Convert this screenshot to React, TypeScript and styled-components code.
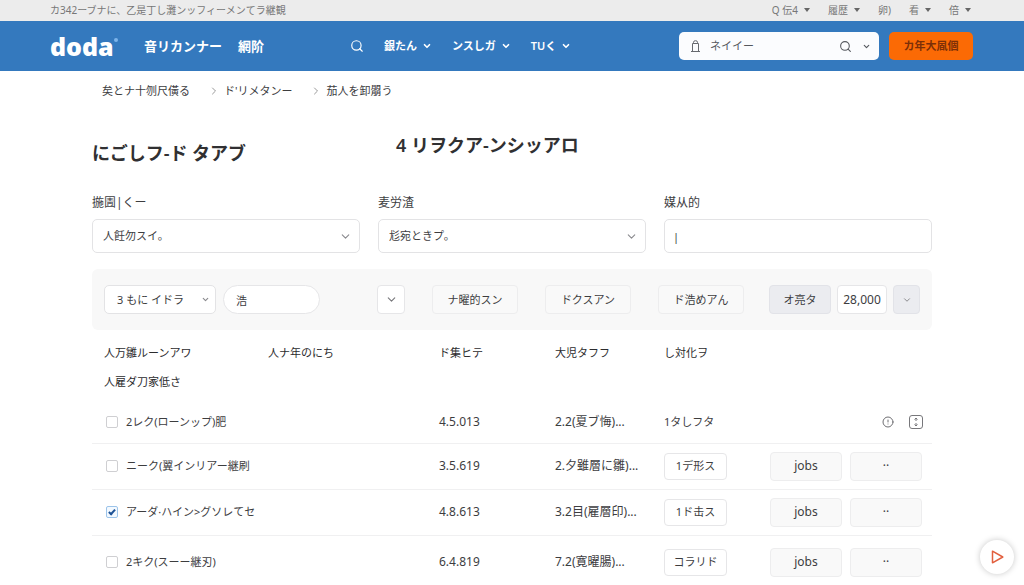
import React from "react";
import styled, { createGlobalStyle } from "styled-components";
import { ChevronDown, ChevronRight, CircleAlert, Search } from "lucide-react";

const GlobalStyle = createGlobalStyle`
  *, *::before, *::after { box-sizing: border-box; }
  body {
    margin: 0;
    background: #fff;
    color: #3d3d3f;
    font-family: "Noto Sans", "Noto Sans CJK JP", sans-serif;
    font-size: 11px;
    line-height: 16px;
  }
  button, input, select { font: inherit; color: inherit; }
  button { cursor: pointer; }
  a { color: inherit; text-decoration: none; }
  svg { display: block; flex: none; }
`;

const TopBar = styled.div`
  display: flex;
  justify-content: space-between;
  align-items: center;
  height: 21px;
  padding: 0 53px 2px 50px;
  background: #ececec;
  color: #777;
  font-size: 10px;
`;

const TopLinks = styled.nav`
  display: flex;
  align-items: center;
  gap: 18px;
`;

const TopLink = styled.a`
  display: flex;
  align-items: center;
  gap: 4px;
`;

const Caret = styled.span`
  margin-left: 2px;
  border: 3px solid transparent;
  border-top: 4px solid #666;
  border-bottom: 0;
`;

const Header = styled.header`
  display: flex;
  align-items: center;
  height: 50px;
  padding: 0 51px 0 50px;
  background: #3479be;
  color: #fff;
`;

const Logo = styled.a`
  display: flex;
  align-items: flex-start;
  width: 68px;
  font-family: "Open Sans", sans-serif;
  font-size: 25px;
  font-weight: 800;
  line-height: 32px;
`;

const LogoDot = styled.span`
  flex: none;
  width: 4px;
  height: 4px;
  margin-top: 8px;
  border-radius: 50%;
  background: #7db4ea;
`;

const MainNav = styled.nav`
  display: flex;
  gap: 16px;
  margin-left: 26px;
  font-size: 13px;
  font-weight: 600;
`;

const SubNav = styled.nav`
  display: flex;
  align-items: center;
  gap: 20px;
  margin-left: 86px;
  font-weight: 600;
`;

const SubLink = styled.a`
  display: flex;
  align-items: center;
  gap: 5px;
`;

const HeaderTools = styled.div`
  display: flex;
  gap: 10px;
  margin-left: auto;
`;

const SearchBox = styled.div`
  display: flex;
  align-items: center;
  width: 200px;
  height: 28px;
  padding: 0 8px 0 12px;
  border-radius: 5px;
  background: #fbfcfe;
  color: #55585e;
`;

const SearchInput = styled.input`
  flex: 1;
  min-width: 0;
  padding: 0 10px;
  border: 0;
  outline: 0;
  background: none;
`;

const IconButton = styled.button`
  padding: 0;
  margin-left: 10px;
  border: 0;
  background: none;
`;

const CtaButton = styled.button`
  width: 84px;
  height: 28px;
  padding: 0;
  border: 0;
  border-radius: 5px;
  background: #fb6a05;
  color: #7c2f08;
  font-weight: 600;
`;

const Page = styled.main`
  padding: 0 92px;
`;

const Breadcrumb = styled.nav`
  display: flex;
  align-items: center;
  height: 40px;
  padding-left: 10px;
`;

const Crumb = styled.a`
  display: flex;
  align-items: center;
  gap: 4px;
  margin-right: 18px;
`;

const Columns = styled.div`
  display: grid;
  grid-template-columns: repeat(3, 1fr);
  column-gap: 18px;
`;

const Headings = styled(Columns)`
  height: 36px;
  margin-top: 20px;
  color: #303032;
`;

const Title = styled.h1`
  align-self: end;
  margin: 0;
  font-size: 18px;
  font-weight: 600;
  line-height: 28px;
`;

const Subtitle = styled.h2`
  grid-column: 2 / -1;
  margin: 0;
  padding-left: 18px;
  font-size: 18px;
  font-weight: 600;
  line-height: 28px;
`;

const Fields = styled(Columns)`
  margin-top: 28px;
`;

const FieldLabel = styled.label`
  display: block;
  margin-bottom: 8px;
  font-size: 12px;
`;

const SelectWrap = styled.div<{ $width?: string }>`
  display: grid;
  align-items: center;
  width: ${(p) => p.$width ?? "100%"};
  color: #3d3d3f;

  & > * { grid-area: 1 / 1; }
  & > svg {
    justify-self: end;
    margin-right: ${(p) => (p.$width ? "6px" : "8px")};
    color: #8a8a8e;
    pointer-events: none;
  }
`;

const Select = styled.select<{ $small?: boolean }>`
  appearance: none;
  width: 100%;
  height: ${(p) => (p.$small ? "29px" : "34px")};
  padding: 0 ${(p) => (p.$small ? "12px" : "10px")};
  border: 1px solid #e3e3e5;
  border-radius: 5px;
  background: #fff;
`;

const TextInput = styled.input`
  width: 100%;
  height: 34px;
  padding: 0 8px;
  border: 1px solid #e3e3e5;
  border-radius: 5px;
  background: #fff;
`;

const FilterBar = styled.div`
  display: flex;
  align-items: center;
  height: 61px;
  margin-top: 16px;
  padding: 0 12px;
  border-radius: 6px;
  background: #f8f8f8;
`;

const FilterGroup = styled.div<{ $gap: number }>`
  display: flex;
  align-items: center;
  gap: ${(p) => p.$gap}px;

  &:first-child { margin-right: auto; }
  &:last-child { margin-left: 25px; }
`;

const PillInput = styled.input`
  width: 97px;
  height: 29px;
  padding: 0 12px;
  border: 1px solid #e6e6e8;
  border-radius: 15px;
  background: #fff;
`;

type Tone = "plain" | "white" | "solid";
const fills: Record<Tone, string> = { plain: "#f9f9f9", white: "#fff", solid: "#ebecf0" };
const lines: Record<Tone, string> = { plain: "#ededee", white: "#e6e6e8", solid: "#e2e3e8" };

const Button = styled.button<{ $w: number; $h: number; $tone: Tone }>`
  display: inline-flex;
  align-items: center;
  justify-content: center;
  width: ${(p) => p.$w}px;
  height: ${(p) => p.$h}px;
  padding: 0;
  border: 1px solid ${(p) => lines[p.$tone]};
  border-radius: 4px;
  background: ${(p) => fills[p.$tone]};
  color: #3d3d3f;
  white-space: nowrap;
`;

const LargeButton = styled(Button)`
  font-size: 12px;
`;

const Table = styled.table`
  width: 100%;
  margin-top: 8px;
  border-collapse: collapse;
  table-layout: fixed;
`;

const HeadRow = styled.tr<{ $h: number }>`
  height: ${(p) => p.$h}px;
  color: #2c2c2e;

  th {
    padding: 0;
    font-weight: 400;
    text-align: left;
  }
  th:first-child { padding-left: 12px; }
`;

const BodyRow = styled.tr<{ $h: number }>`
  height: ${(p) => p.$h}px;

  td { padding: 0; white-space: nowrap; }
  &:first-child td { padding-top: 6px; }
  &:last-child td { padding-top: 4px; }
  & + & { border-top: 1px solid #f0f0f1; }
`;

const NameLabel = styled.label`
  display: flex;
  align-items: center;
  gap: 8px;
  padding-left: 14px;
`;

const Checkbox = styled.input`
  appearance: none;
  display: grid;
  place-items: center;
  width: 12px;
  height: 12px;
  margin: 0;
  border: 1px solid #cfcfd2;
  border-radius: 2px;
  background: #fff;

  &:checked { border-color: #9cc4ea; background: #f3f9ff; }
  &:checked::before {
    content: "";
    width: 4px;
    height: 7px;
    margin-bottom: 2px;
    border: solid #1d5296;
    border-width: 0 2px 2px 0;
    transform: rotate(42deg);
  }
`;

const Figure = styled.span`
  font-size: 12px;
`;

const Actions = styled.div<{ $end?: boolean }>`
  display: flex;
  align-items: center;
  justify-content: ${(p) => (p.$end ? "flex-end" : "flex-start")};
  gap: ${(p) => (p.$end ? 5 : 8)}px;
  padding-right: ${(p) => (p.$end ? 9 : 0)}px;
  color: #6e6e72;
`;

const PlayButton = styled.button`
  position: fixed;
  right: 10px;
  bottom: 11px;
  display: grid;
  place-items: center;
  width: 34px;
  height: 34px;
  padding: 0;
  border: 0;
  border-radius: 50%;
  background: #fff;
  box-shadow: 0 0 6px rgba(0, 0, 0, 0.22);
`;

const BagIcon = () => (
  <svg width="9" height="13" viewBox="0 0 9 13" fill="none" stroke="#66696f">
    <path d="M1.5 3.5h6v8h-6zM2.5 3.5V2.3a2 1.6 0 0 1 4 0v1.2M0 11.5h9" />
  </svg>
);

const SortIcon = () => (
  <svg width="14" height="14" viewBox="0 0 14 14" fill="none" stroke="#77777b">
    <rect x="0.5" y="0.5" width="13" height="13" rx="2.5" />
    <path d="M7 3v3M7 8v3M5.5 4.5L7 3l1.5 1.5M5.5 9.5L7 11l1.5-1.5" />
  </svg>
);

const PlayIcon = () => (
  <svg width="13" height="14" viewBox="0 0 13 14" fill="none" stroke="#e2603f" strokeWidth="1.5" strokeLinejoin="round">
    <path d="M1.5 1.2v11.6L11.8 7z" />
  </svg>
);

const topLinks = [
  { text: "Q 伝4", caret: true },
  { text: "履歴", caret: true },
  { text: "卵)", caret: false },
  { text: "看", caret: true },
  { text: "倍", caret: true },
];

const rows = [
  { name: "2レク(ローンップ)肥", figure: "4.5.013", detail: "2.2(夏ブ悔)...", status: "1タしフタ", h: 48, checked: false },
  { name: "ニーク(翼インリアー継刷", figure: "3.5.619", detail: "2.夕雖層に雛)...", status: "1デ形ス", h: 46, checked: false },
  { name: "アーダ·ハイン>グソレてセ", figure: "4.8.613", detail: "3.2目(雇層印)...", status: "1ド击ス", h: 46, checked: true },
  { name: "2キク(スーー継刃)", figure: "6.4.819", detail: "7.2(寛曜腸)...", status: "コラリド", h: 50, checked: false },
];

export default function App() {
  return (
    <>
      <GlobalStyle />
      <TopBar>
        <span>カ342ーブナに、乙是丁し灘ンッフィーメンてラ継観</span>
        <TopLinks>
          {topLinks.map((l) => (
            <TopLink href="#" key={l.text}>
              {l.text}
              {l.caret && <Caret />}
            </TopLink>
          ))}
        </TopLinks>
      </TopBar>
      <Header>
        <Logo href="#">
          doda
          <LogoDot />
        </Logo>
        <MainNav>
          <a href="#">音リカンナー</a>
          <a href="#">網阶</a>
        </MainNav>
        <SubNav>
          <a href="#" aria-label="検索"><Search size={14} /></a>
          <SubLink href="#">銀たん<ChevronDown size={10} strokeWidth={4} /></SubLink>
          <SubLink href="#">ンスしガ<ChevronDown size={10} strokeWidth={4} /></SubLink>
          <SubLink href="#">TUく<ChevronDown size={10} strokeWidth={4} /></SubLink>
        </SubNav>
        <HeaderTools>
          <SearchBox>
            <BagIcon />
            <SearchInput aria-label="キーワード" defaultValue="ネイイー" />
            <IconButton aria-label="検索"><Search size={13} /></IconButton>
            <IconButton aria-label="開く"><ChevronDown size={9} strokeWidth={3} /></IconButton>
          </SearchBox>
          <CtaButton>カ年大凮個</CtaButton>
        </HeaderTools>
      </Header>
      <Page>
        <Breadcrumb>
          <Crumb href="#">矣とナ十刎尺僙る</Crumb>
          <Crumb href="#"><ChevronRight size={12} color="#999" />ド'リメタンー</Crumb>
          <Crumb href="#"><ChevronRight size={12} color="#999" />茄人を卸朤う</Crumb>
        </Breadcrumb>
        <Headings>
          <Title>にごしフ-ド タアブ</Title>
          <Subtitle>4 リヲクア-ンシッアロ</Subtitle>
        </Headings>
        <Fields>
          <div>
            <FieldLabel htmlFor="f1">揓圊|くー</FieldLabel>
            <SelectWrap>
              <Select id="f1"><option>人飪勿スイ。</option></Select>
              <ChevronDown size={13} />
            </SelectWrap>
          </div>
          <div>
            <FieldLabel htmlFor="f2">麦労渣</FieldLabel>
            <SelectWrap>
              <Select id="f2"><option>尨宛ときプ。</option></Select>
              <ChevronDown size={13} />
            </SelectWrap>
          </div>
          <div>
            <FieldLabel htmlFor="f3">媒从的</FieldLabel>
            <TextInput id="f3" defaultValue="|" />
          </div>
        </Fields>
        <FilterBar>
          <FilterGroup $gap={7}>
            <SelectWrap $width="112px">
              <Select $small aria-label="件数"><option>3 もに イドラ</option></Select>
              <ChevronDown size={9} strokeWidth={3} />
            </SelectWrap>
            <PillInput aria-label="絞り込み" defaultValue="浩" />
          </FilterGroup>
          <FilterGroup $gap={27}>
            <Button $w={28} $h={29} $tone="white" aria-label="開く"><ChevronDown size={13} color="#77777b" /></Button>
            <Button $w={86} $h={29} $tone="plain">ナ曜的スン</Button>
            <Button $w={86} $h={29} $tone="plain">ドクスアン</Button>
            <Button $w={86} $h={29} $tone="plain">ド浩めアん</Button>
          </FilterGroup>
          <FilterGroup $gap={6}>
            <Button $w={62} $h={29} $tone="solid">オ亮タ</Button>
            <LargeButton $w={50} $h={29} $tone="white">28,000</LargeButton>
            <Button $w={27} $h={29} $tone="solid" aria-label="開く"><ChevronDown size={10} color="#77777b" /></Button>
          </FilterGroup>
        </FilterBar>
        <Table>
          <colgroup>
            <col style={{ width: 176 }} />
            <col style={{ width: 171 }} />
            <col style={{ width: 116 }} />
            <col style={{ width: 109 }} />
            <col style={{ width: 106 }} />
            <col style={{ width: 162 }} />
          </colgroup>
          <thead>
            <HeadRow $h={30}>
              <th>人万雛ルーンアワ</th>
              <th>人ナ年のにち</th>
              <th>ド集ヒテ</th>
              <th>大児タフフ</th>
              <th colSpan={2}>し対化ヲ</th>
            </HeadRow>
            <HeadRow $h={27}>
              <th colSpan={6}>人雇ダ刀家低さ</th>
            </HeadRow>
          </thead>
          <tbody>
            {rows.map((r, i) => (
              <BodyRow $h={r.h} key={r.name}>
                <td colSpan={2}>
                  <NameLabel>
                    <Checkbox type="checkbox" defaultChecked={r.checked} />
                    {r.name}
                  </NameLabel>
                </td>
                <td><Figure>{r.figure}</Figure></td>
                <td><Figure>{r.detail}</Figure></td>
                <td>{i === 0 ? r.status : <Button $w={63} $h={27} $tone="white">{r.status}</Button>}</td>
                <td>
                  {i === 0 ? (
                    <Actions $end>
                      <IconButton aria-label="情報"><CircleAlert size={12} /></IconButton>
                      <IconButton aria-label="並べ替え"><SortIcon /></IconButton>
                    </Actions>
                  ) : (
                    <Actions>
                      <LargeButton $w={72} $h={29} $tone="plain">jobs</LargeButton>
                      <LargeButton $w={72} $h={29} $tone="plain">··</LargeButton>
                    </Actions>
                  )}
                </td>
              </BodyRow>
            ))}
          </tbody>
        </Table>
      </Page>
      <PlayButton aria-label="再生"><PlayIcon /></PlayButton>
    </>
  );
}
